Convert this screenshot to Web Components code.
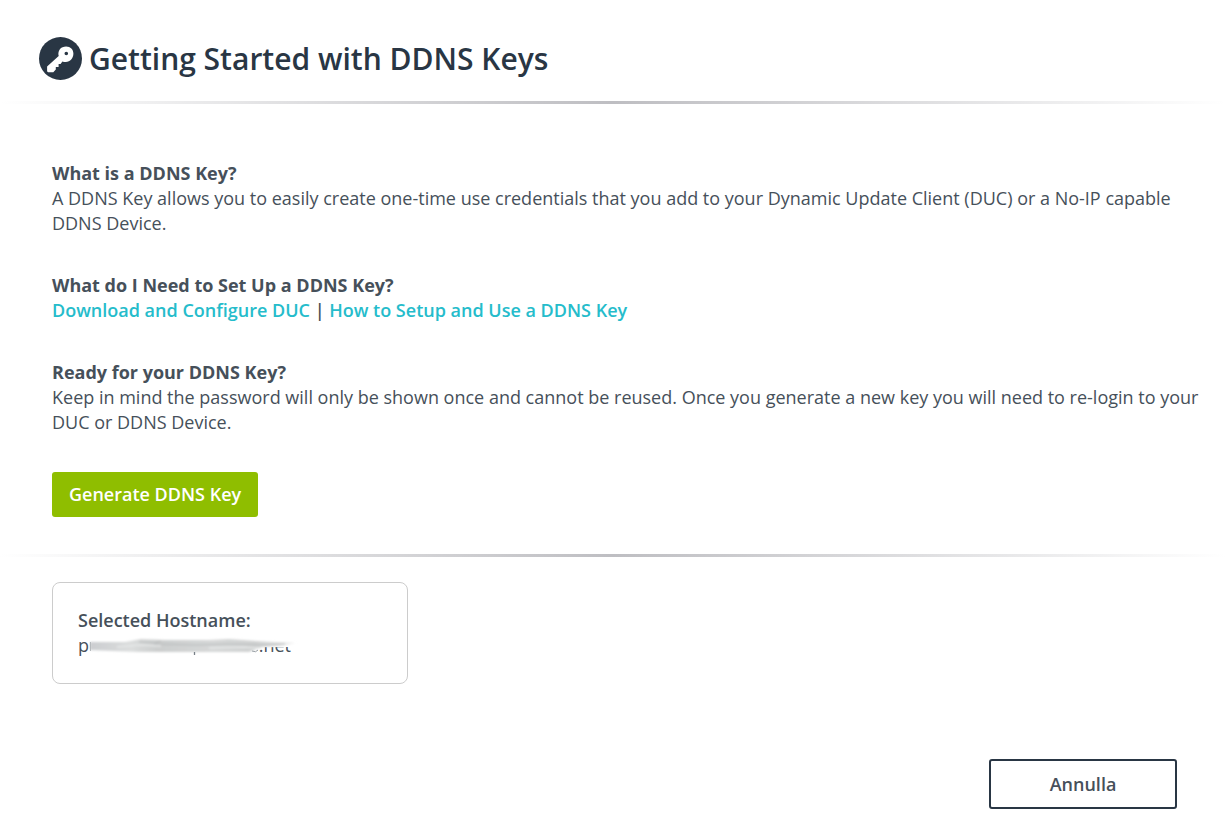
<!DOCTYPE html>
<html lang="en">
<head>
<meta charset="utf-8">
<title>Getting Started with DDNS Keys</title>
<style>
body { margin: 0; background: #fff; color: #46505a; font: 400 18px/25px "Open Sans", sans-serif; }
</style>
</head>
<body>
<ddns-page></ddns-page>

<template id="t-page">
<style>
:host { display: block; }
main { display: flex; flex-direction: column; gap: 37px; padding: 57px 26px 37px 52px; }
.host { padding: 25px 52px 0; }
footer { display: flex; justify-content: flex-end; padding: 75px 49px 16px; }
</style>
<page-title>Getting Started with DDNS Keys</page-title>
<fade-rule></fade-rule>
<main>
<info-block><span slot="heading">What is a DDNS Key?</span>A DDNS Key allows you to easily create one-time use credentials that you add to your Dynamic Update Client (DUC) or a No-IP capable DDNS Device.</info-block>
<info-block><span slot="heading">What do I Need to Set Up a DDNS Key?</span><help-links></help-links></info-block>
<info-block><span slot="heading">Ready for your DDNS Key?</span>Keep in mind the password will only be shown once and cannot be reused. Once you generate a new key you will need to re-login to your DUC or DDNS Device.</info-block>
<action-button kind="primary">Generate DDNS Key</action-button>
</main>
<fade-rule></fade-rule>
<div class="host"><hostname-card></hostname-card></div>
<footer><action-button kind="outline">Annulla</action-button></footer>
</template>

<template id="t-title">
<style>
:host { display: flex; align-items: center; gap: 7px; padding: 37px 39px 21px; color: #293644; }
svg { flex: none; width: 43px; height: 43px; }
h1 { margin: 0; font-size: 30px; line-height: 43px; font-weight: 600; }
</style>
<svg viewBox="0 0 43 43" aria-hidden="true">
<circle cx="21.5" cy="21.5" r="21.5" fill="#293644"/>
<path fill="#fff" fill-rule="evenodd" d="M20.7 12.4C22.2 10.3 24.7 9.5 27.1 9.5C31.4 9.5 34.4 12.5 34.4 16.8C34.4 21.2 31.2 24.9 26.8 24.9C25.5 24.9 24.4 24.8 23.4 24.4L21.6 27H19.6V30H16.800V32.600L14.3 35.200H9.2Q8.1 35.200 8.1 34.100V29.4L19.7 18.9C19 16.7 19.4 14.3 20.7 12.4ZM27.3 14.7A1.8 1.8 0 1 0 27.3 18.3A1.8 1.8 0 1 0 27.3 14.7Z"/>
</svg>
<h1><slot></slot></h1>
</template>

<template id="t-rule">
<style>
:host { display: block; height: 3px; background: linear-gradient(to right, #fff, #bebec2 50%, #fff); }
</style>
</template>

<template id="t-info">
<style>
:host { display: block; }
h2 { margin: 0; font: inherit; font-weight: 700; }
</style>
<h2><slot name="heading"></slot></h2>
<div><slot></slot></div>
</template>

<template id="t-links">
<style>
:host { display: block; font-weight: 600; }
a { color: #25bccb; text-decoration: none; }
</style>
<a href="#duc">Download and Configure DUC</a> <span>|</span> <a href="#setup">How to Setup and Use a DDNS Key</a>
</template>

<template id="t-button">
<style>
:host { display: flex; }
button { box-sizing: border-box; font: inherit; font-weight: 600; border-radius: 3px; cursor: pointer; }
.primary { height: 45px; padding: 0 17px; border: 0; background: #8fbe00; color: #fff; }
.outline { height: 50px; width: 188px; border: 2px solid #293644; background: #fff; color: #46505a; }
</style>
<button type="button"><slot></slot></button>
</template>

<template id="t-card">
<style>
:host { display: block; box-sizing: border-box; max-width: 356px; padding: 25px; border: 1px solid #ccc; border-radius: 8px; }
h2 { margin: 0; font: inherit; font-weight: 600; }
.name { position: relative; display: flex; justify-content: space-between; width: 213px; }
svg { position: absolute; left: 11px; top: 0; width: 212px; height: 25px; }
</style>
<h2>Selected Hostname:</h2>
<div class="name"><span>p</span><span>.net</span>
<svg viewBox="0 0 212 25" aria-hidden="true">
<defs>
<linearGradient id="smear" x1="0" x2="1" y1="0" y2="0">
<stop offset="0" stop-color="#cbcdd0"/><stop offset=".2" stop-color="#dbdddd"/><stop offset=".33" stop-color="#cccece"/><stop offset=".6" stop-color="#d6d8d8"/><stop offset=".8" stop-color="#cfd1d1"/><stop offset="1" stop-color="#eee"/>
</linearGradient>
<filter id="soft" x="-5%" y="-50%" width="110%" height="200%"><feGaussianBlur stdDeviation="1"/></filter>
</defs>
<path fill="#fff" d="M1 0H212V13L202 14L174 14L165 21H1Z"/>
<g filter="url(#soft)">
<path fill="url(#smear)" d="M1 9L36 9L52 6L74 7L120 7L140 6L167 8L207 10L190 13L173 14L160 19L110 19L50 19L24 18L1 17Z"/>
<path fill="none" stroke="#b8bbbc" stroke-width="1" d="M50 9L66 10L72 8M65 11L108 12L138 11L168 12L196 11"/>
<path fill="none" stroke="#e6e8e8" stroke-width="1.5" d="M28 14L51 12L72 13M120 15L155 14L172 15"/>
</g>
<path fill="none" stroke="#b6babd" stroke-width="1" d="M1.5 9V18"/>
<path fill="none" stroke="#777f87" stroke-width="1.3" d="M105.5 19V22"/>
<path fill="none" stroke="#9aa0a6" stroke-width="1" d="M163 18Q167 20 169 17"/>
</svg>
</div>
</template>

<script>
const define = (name, templateId, setup) => customElements.define(name, class extends HTMLElement {
  constructor() {
    super();
    this.attachShadow({ mode: "open" }).append(document.getElementById(templateId).content.cloneNode(true));
  }
  connectedCallback() { if (setup) setup(this); }
});
define("page-title", "t-title");
define("fade-rule", "t-rule");
define("info-block", "t-info");
define("help-links", "t-links");
define("action-button", "t-button", el => {
  el.shadowRoot.querySelector("button").className = el.getAttribute("kind");
});
define("hostname-card", "t-card");
define("ddns-page", "t-page");
</script>
</body>
</html>
